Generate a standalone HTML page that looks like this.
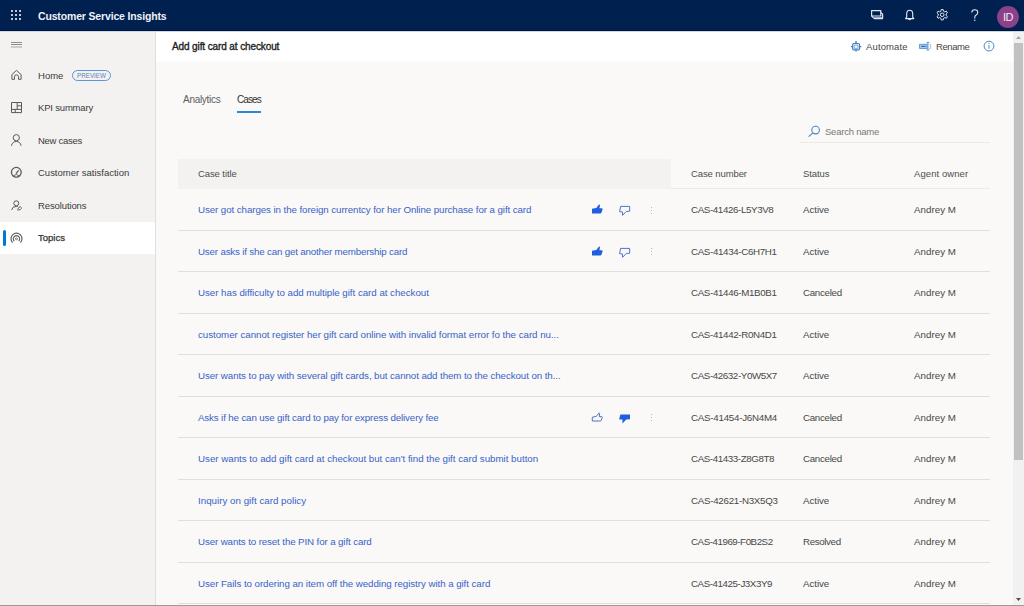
<!DOCTYPE html>
<html><head><meta charset="utf-8">
<style>
*{box-sizing:border-box;margin:0;padding:0}
html,body{width:1024px;height:606px;overflow:hidden;font-family:"Liberation Sans",sans-serif;background:#faf9f8;position:relative}
div,span,svg{position:absolute}
.top{left:0;top:0;width:1024px;height:31px;background:#002050;border-bottom:1px solid #001238;color:#fff}
.waffle{left:11px;top:10px;width:11px;height:11px}
.waffle i{position:absolute;width:2px;height:2px;background:#fff;border-radius:1px}
.brand{left:38px;top:9px;font-size:10.5px;font-weight:bold;color:#eef1f7;letter-spacing:-0.2px;line-height:14px;white-space:nowrap}
.avatar{left:997px;top:6px;width:22px;height:22px;border-radius:50%;background:#8b4288;color:#f4eaf4;font-size:11px;line-height:23.5px;text-align:center;letter-spacing:-0.4px}
.side{left:0;top:31px;width:156px;height:575px;background:#f3f2f1;border-right:1px solid #e1dfdd}
.nav{left:0;width:155px;height:32px;font-size:9.5px;color:#3b3a39;line-height:32px;white-space:nowrap}
.nav .lbl{left:38px;top:0;letter-spacing:-0.1px}
.nav svg{left:10px;top:9px}
.nav.sel{background:#fff;color:#323130;-webkit-text-stroke:0.25px #323130}
.nav.sel:before{content:"";position:absolute;left:3px;top:8px;width:3px;height:16px;background:#0078d4;border-radius:1.5px}
.badge{left:72px;top:10.5px;width:39px;height:11px;border:1px solid #5b95d6;border-radius:6px;font-size:6.3px;color:#5a84c0;line-height:9px;text-align:center;letter-spacing:0}
.hdr{left:156px;top:31px;width:857px;height:32px;background:linear-gradient(#fff 0,#fff 29px,#faf9f8 32px)}
.title{left:172px;top:41px;font-size:10px;font-weight:normal;-webkit-text-stroke:0.35px #201f1e;color:#201f1e;letter-spacing:-0.3px;white-space:nowrap;line-height:12px}
.act{top:41px;font-size:9.5px;color:#484644;white-space:nowrap;line-height:12px}
.scroll{left:1013px;top:31px;width:11px;height:575px;background:#f1f1f1}
.thumb{left:1px;top:11.5px;width:9px;height:417.5px;background:#c1c1c1}
.tabs{top:93.5px;font-size:10px;color:#605e5c;white-space:nowrap;line-height:12px;letter-spacing:-0.2px}
.uline{left:237px;top:111px;width:24px;height:2px;background:#2a86d6}
.search{left:800px;top:122px;width:190px;height:21px;border-bottom:1px solid #edebe9}
.search .ph{left:25px;top:3.75px;font-size:9.5px;color:#797775;line-height:12px;white-space:nowrap;letter-spacing:-0.1px}
.thbg{left:178px;top:159px;width:493px;height:30px;background:#f3f2f1}
.thline{left:670px;top:188px;width:320px;height:1px;background:#edebe9}
.th{top:159px;height:30px;line-height:30px;font-size:9.5px;color:#4f4e4d;white-space:nowrap;letter-spacing:-0.1px}
.row{left:178px;width:812px;height:41.5px;border-bottom:1px solid #e1dfdd}
.row span{top:0;line-height:42px;font-size:9.75px;white-space:nowrap;letter-spacing:-0.1px}
.row .t{left:20px;color:#3863c6}
.row .n{left:513px;color:#484746}
.row .s{left:625px;color:#484746}
.row .a{left:736px;color:#484746}
.keb{left:651px;width:2px;height:8px}
.keb i{position:absolute;left:0;width:1.4px;height:1.4px;background:#8aa6d6;border-radius:1px}
</style></head><body>
<div style="left:0;top:31px;width:1024px;height:1px;background:#c9d7e6;z-index:2"></div>
<div class="top">
  <div class="waffle"><i style="left:0;top:0"></i><i style="left:4px;top:0"></i><i style="left:8px;top:0"></i><i style="left:0;top:4px"></i><i style="left:4px;top:4px"></i><i style="left:8px;top:4px"></i><i style="left:0;top:8px"></i><i style="left:4px;top:8px"></i><i style="left:8px;top:8px"></i></div>
  <div class="brand" style=";letter-spacing:-0.157px">Customer Service Insights</div>
  <div class="avatar">ID</div>
</div>
<div class="side">
  <div class="nav" style="top:28.60px"><span class="lbl" style=";letter-spacing:0.019px">Home</span><span class="badge">PREVIEW</span></div>
  <div class="nav" style="top:61.17px"><span class="lbl" style=";letter-spacing:-0.182px">KPI summary</span></div>
  <div class="nav" style="top:93.74px"><span class="lbl" style=";letter-spacing:-0.271px">New cases</span></div>
  <div class="nav" style="top:126.31px"><span class="lbl" style=";letter-spacing:-0.007px">Customer satisfaction</span></div>
  <div class="nav" style="top:158.88px"><span class="lbl" style=";letter-spacing:-0.114px">Resolutions</span></div>
  <div class="nav sel" style="top:191.45px"><span class="lbl" style=";letter-spacing:0.013px">Topics</span></div>
</div>
<div class="hdr"></div>
<div class="title" style=";letter-spacing:-0.112px">Add gift card at checkout</div>
<div class="act" style="left:866px;letter-spacing:0.133px">Automate</div>
<div class="act" style="left:936px;letter-spacing:-0.424px">Rename</div>
<div class="tabs" style="left:183px;letter-spacing:-0.289px">Analytics</div>
<div class="tabs" style="left:237px;color:#323130;letter-spacing:-0.915px">Cases</div>
<div class="uline"></div>
<div class="search"><div class="ph" style=";letter-spacing:-0.222px">Search name</div></div>
<div class="thbg"></div>
<div class="thline"></div>
<div class="th" style="left:198px;letter-spacing:-0.090px">Case title</div>
<div class="th" style="left:691px;letter-spacing:-0.103px">Case number</div>
<div class="th" style="left:803px;letter-spacing:-0.108px">Status</div>
<div class="th" style="left:914px;letter-spacing:0.076px">Agent owner</div>
<div class="row" style="top:189.0px"><span class="t" style=";letter-spacing:-0.086px">User got charges in the foreign currentcy for her Online purchase for a gift card</span><span class="n" style=";letter-spacing:-0.371px">CAS-41426-L5Y3V8</span><span class="s" style=";letter-spacing:-0.052px">Active</span><span class="a" style=";letter-spacing:0.038px">Andrey M</span></div>
<svg class="ic" style="left:588px;top:200.0px" width="18" height="16" viewBox="0 0 18 16"><path d="M4,8.8 L8.3,8 L10.8,4.8 Q11.8,4.1 12,5.4 L11.4,8.2 L14,8.2 Q14.9,8.6 14.5,9.6 L13.3,13 Q13,13.4 12.3,13.4 L4,13.4 Z" fill="#1f5fdf"/></svg>
<svg class="ic" style="left:616px;top:202.0px" width="18" height="16" viewBox="0 0 18 16"><path d="M4.6,4.4 L13.7,4.4 L13.7,9.2 L10.2,9.5 L6.6,13.3 L6.4,9.9 L3.6,9.7 Z" fill="none" stroke="#4f74c6" stroke-width="1" stroke-linejoin="round"/></svg>
<div class="keb" style="top:206.5px"><i style="top:0"></i><i style="top:3px"></i><i style="top:6px"></i></div>
<div class="row" style="top:230.5px"><span class="t" style=";letter-spacing:-0.180px">User asks if she can get another membership card</span><span class="n" style=";letter-spacing:-0.343px">CAS-41434-C6H7H1</span><span class="s" style=";letter-spacing:-0.052px">Active</span><span class="a" style=";letter-spacing:0.038px">Andrey M</span></div>
<svg class="ic" style="left:588px;top:241.5px" width="18" height="16" viewBox="0 0 18 16"><path d="M4,8.8 L8.3,8 L10.8,4.8 Q11.8,4.1 12,5.4 L11.4,8.2 L14,8.2 Q14.9,8.6 14.5,9.6 L13.3,13 Q13,13.4 12.3,13.4 L4,13.4 Z" fill="#1f5fdf"/></svg>
<svg class="ic" style="left:616px;top:243.5px" width="18" height="16" viewBox="0 0 18 16"><path d="M4.6,4.4 L13.7,4.4 L13.7,9.2 L10.2,9.5 L6.6,13.3 L6.4,9.9 L3.6,9.7 Z" fill="none" stroke="#4f74c6" stroke-width="1" stroke-linejoin="round"/></svg>
<div class="keb" style="top:248.0px"><i style="top:0"></i><i style="top:3px"></i><i style="top:6px"></i></div>
<div class="row" style="top:272.0px"><span class="t" style=";letter-spacing:-0.035px">User has difficulty to add multiple gift card at checkout</span><span class="n" style=";letter-spacing:-0.344px">CAS-41446-M1B0B1</span><span class="s" style=";letter-spacing:-0.300px">Canceled</span><span class="a" style=";letter-spacing:0.038px">Andrey M</span></div>
<div class="row" style="top:313.5px"><span class="t" style=";letter-spacing:-0.043px">customer cannot register her gift card online with invalid format error fo the card nu...</span><span class="n" style=";letter-spacing:-0.343px">CAS-41442-R0N4D1</span><span class="s" style=";letter-spacing:-0.052px">Active</span><span class="a" style=";letter-spacing:0.038px">Andrey M</span></div>
<div class="row" style="top:355.0px"><span class="t" style=";letter-spacing:-0.088px">User wants to pay with several gift cards, but cannot add them to the checkout on th...</span><span class="n" style=";letter-spacing:-0.389px">CAS-42632-Y0W5X7</span><span class="s" style=";letter-spacing:-0.052px">Active</span><span class="a" style=";letter-spacing:0.038px">Andrey M</span></div>
<div class="row" style="top:396.5px"><span class="t" style=";letter-spacing:-0.144px">Asks if he can use gift card to pay for express delivery fee</span><span class="n" style=";letter-spacing:-0.245px">CAS-41454-J6N4M4</span><span class="s" style=";letter-spacing:-0.300px">Canceled</span><span class="a" style=";letter-spacing:0.038px">Andrey M</span></div>
<svg class="ic" style="left:588px;top:407.5px" width="18" height="16" viewBox="0 0 18 16"><path d="M4.3,9.2 L8.3,8.4 L10.8,5.2 Q11.6,4.6 11.7,5.8 L11.2,8.6 L13.9,8.6 Q14.5,8.9 14.2,9.7 L13.1,12.7 Q12.9,13 12.4,13 L4.3,13 Z" fill="none" stroke="#4f74c6" stroke-width="1" stroke-linejoin="round"/></svg>
<svg class="ic" style="left:616px;top:409.5px" width="18" height="16" viewBox="0 0 18 16"><path d="M4.4,4.6 L14,4.6 L14,9.2 L10.2,9.4 L6.5,13.6 L6.4,9.6 L3.4,9.4 Q3.1,9.2 3.3,8.6 Z" fill="#1f5fdf"/></svg>
<div class="keb" style="top:414.0px"><i style="top:0"></i><i style="top:3px"></i><i style="top:6px"></i></div>
<div class="row" style="top:438.0px"><span class="t" style=";letter-spacing:-0.012px">User wants to add gift card at checkout but can&#39;t find the gift card submit button</span><span class="n" style=";letter-spacing:-0.395px">CAS-41433-Z8G8T8</span><span class="s" style=";letter-spacing:-0.300px">Canceled</span><span class="a" style=";letter-spacing:0.038px">Andrey M</span></div>
<div class="row" style="top:479.5px"><span class="t" style=";letter-spacing:0.009px">Inquiry on gift card policy</span><span class="n" style=";letter-spacing:-0.271px">CAS-42621-N3X5Q3</span><span class="s" style=";letter-spacing:-0.052px">Active</span><span class="a" style=";letter-spacing:0.038px">Andrey M</span></div>
<div class="row" style="top:521.0px"><span class="t" style=";letter-spacing:-0.120px">User wants to reset the PIN for a gift card</span><span class="n" style=";letter-spacing:-0.453px">CAS-41969-F0B2S2</span><span class="s" style=";letter-spacing:-0.365px">Resolved</span><span class="a" style=";letter-spacing:0.038px">Andrey M</span></div>
<div class="row" style="top:562.5px"><span class="t" style=";letter-spacing:-0.063px">User Fails to ordering an item off the wedding registry with a gift card</span><span class="n" style=";letter-spacing:-0.427px">CAS-41425-J3X3Y9</span><span class="s" style=";letter-spacing:-0.052px">Active</span><span class="a" style=";letter-spacing:0.038px">Andrey M</span></div>
<svg style="left:0;top:0" width="1024" height="606" viewBox="0 0 1024 606">
<g fill="none" stroke-linejoin="round">
<!-- chat -->
<path d="M871.6,10.6 H880.8 V16 H871.6 Z" stroke="#dfe6f2" stroke-width="1.2"/>
<path d="M871.6,16 L874.4,18.6 H882.6 V14.2 L880.8,12.4" stroke="#dfe6f2" stroke-width="1.2"/>
<path d="M874.4,17.9 H882" stroke="#dfe6f2" stroke-width="1.2"/>
<!-- bell -->
<path d="M906.7,17.2 V14 Q906.7,10.2 909.7,10.2 Q912.7,10.2 912.7,14 V17.2 L913.8,18.6 H905.6 Z" stroke="#e6ebf3" stroke-width="1.1"/>
<path d="M908.6,19 Q909.7,20.4 910.8,19" stroke="#e6ebf3" stroke-width="1.1"/>
<!-- gear -->
<path d="M941.2,9.6 L943.2,9.6 L943.6,11.3 L944.8,11.9 L946.3,11.1 L947.4,12.8 L946.1,14 L946.1,15.4 L947.4,16.6 L946.3,18.3 L944.8,17.5 L943.6,18.2 L943.2,19.9 L941.2,19.9 L940.8,18.2 L939.6,17.5 L938.1,18.3 L937,16.6 L938.3,15.4 L938.3,14 L937,12.8 L938.1,11.1 L939.6,11.9 L940.8,11.3 Z" stroke="#e6ebf3" stroke-width="1"/>
<circle cx="942.2" cy="14.75" r="1.8" stroke="#e6ebf3" stroke-width="1"/>
<!-- help -->
<path d="M971.8,12.6 Q971.8,9.8 974.8,9.8 Q977.8,9.8 977.8,12.6 Q977.8,14.3 975.9,15.3 Q974.8,15.9 974.8,17.3 V18.4" stroke="#e6ebf3" stroke-width="1.1"/>
<circle cx="974.8" cy="20.2" r="0.7" fill="#e6ebf3" stroke="none"/>
<!-- hamburger -->
<path d="M11,42.5 H22 M11,44.5 H22" stroke="#8f8d8b" stroke-width="1"/>
<path d="M11,47 H22" stroke="#b8b6b4" stroke-width="1.3"/>
<!-- home -->
<path d="M11.9,74.6 L16.5,70.4 L21.1,74.6 V79.3 H18.5 V76.6 Q18.5,74.9 16.5,74.9 Q14.5,74.9 14.5,76.6 V79.3 H11.9 Z" stroke="#5a5958" stroke-width="1"/>
<!-- kpi -->
<path d="M11.5,102.5 H21.5 V112.6 H11.5 Z M17.2,102.5 V109.4 M11.5,109.4 H21.5 M17.2,105.8 H21.5 M15.2,109.4 V112.6" stroke="#5a5958" stroke-width="1"/>
<!-- new cases -->
<circle cx="16.3" cy="137.7" r="3.1" stroke="#5a5958" stroke-width="1"/>
<path d="M11.4,145.8 Q12.4,141.5 16.3,141.5 Q20.2,141.5 21.2,145.8" stroke="#5a5958" stroke-width="1"/>
<!-- satisfaction -->
<circle cx="16.3" cy="172.3" r="4.9" stroke="#5a5958" stroke-width="1.3"/>
<path d="M16,173.6 L18.6,170.4" stroke="#5a5958" stroke-width="1.3"/>
<path d="M13.4,175.8 Q16.3,173.2 19.2,175.8" stroke="#5a5958" stroke-width="0.9"/>
<!-- resolutions -->
<circle cx="16.3" cy="203.3" r="2.5" stroke="#5a5958" stroke-width="1"/>
<path d="M11.6,210 Q12.2,206.4 16.3,206.4 Q17.2,206.4 17.8,206.6" stroke="#5a5958" stroke-width="1"/>
<path d="M17.8,210.2 L18.2,208.3 Q19,206.6 20.3,206.8 Q21.8,207.3 21.3,208.7 Q20.6,210 18.9,209.8 Z" stroke="#5a5958" stroke-width="0.9"/>
<!-- topics -->
<path d="M12.6,242.6 A5.5,5.5 0 1 1 20.4,242.6" stroke="#5f5e5d" stroke-width="1.2"/>
<path d="M14.3,241.1 A3.2,3.2 0 1 1 18.7,241.1" stroke="#5f5e5d" stroke-width="1.1"/>
<circle cx="16.5" cy="238.8" r="1" stroke="#5f5e5d" stroke-width="0.8"/>
<!-- automate robot -->
<path d="M856,41 V43.4" stroke="#4a7fc0" stroke-width="1.5"/>
<rect x="852.6" y="43.5" width="7" height="6.4" rx="1.2" fill="#d6e8f8" stroke="#4a7fc0" stroke-width="1.1"/>
<rect x="854.4" y="45.2" width="3.4" height="3.3" fill="#eef6fd" stroke="#6e9ad0" stroke-width="0.7"/>
<path d="M851,46.6 H852.6 M859.6,46.6 H861.2 M856,49.9 V51.6" stroke="#4a7fc0" stroke-width="1.3"/>
<!-- rename -->
<rect x="919.5" y="44.3" width="7.6" height="4.2" fill="#a8cbed" stroke="#5b93cf" stroke-width="0.9"/>
<path d="M921.2,46.4 H925.6" stroke="#2f6db8" stroke-width="1.2"/>
<path d="M927.9,42.4 V50 M926.6,42.4 H929.2 M926.6,50 H929.2" stroke="#5b93cf" stroke-width="1"/>
<path d="M929.2,44.3 H930.6 V48.5 H929.2" stroke="#9fbfe0" stroke-width="0.9"/>
<!-- info -->
<circle cx="989" cy="46.1" r="4.9" stroke="#4a86c8" stroke-width="1"/>
<path d="M989,45 V48.8" stroke="#4a86c8" stroke-width="1"/>
<circle cx="989" cy="43.4" r="0.55" fill="#4a86c8" stroke="none"/>
<!-- search -->
<circle cx="815.6" cy="130.1" r="3.8" stroke="#4a86c8" stroke-width="1.1"/>
<path d="M812.9,132.9 L808.7,136.6" stroke="#4a86c8" stroke-width="1.2"/>
</g>
</svg>
<div class="scroll"><svg style="left:0;top:0" width="11" height="11" viewBox="0 0 11 11"><path d="M3,8 L5.5,5 L8,8 Z" fill="#a3a3a3"/></svg><div class="thumb"></div><svg style="left:0;top:564px" width="11" height="11" viewBox="0 0 11 11"><path d="M3,3 L5.5,6 L8,3 Z" fill="#505050"/></svg></div>
<div style="left:0;top:605px;width:1024px;height:1px;background:#9a9a9a"></div>
</body></html>
